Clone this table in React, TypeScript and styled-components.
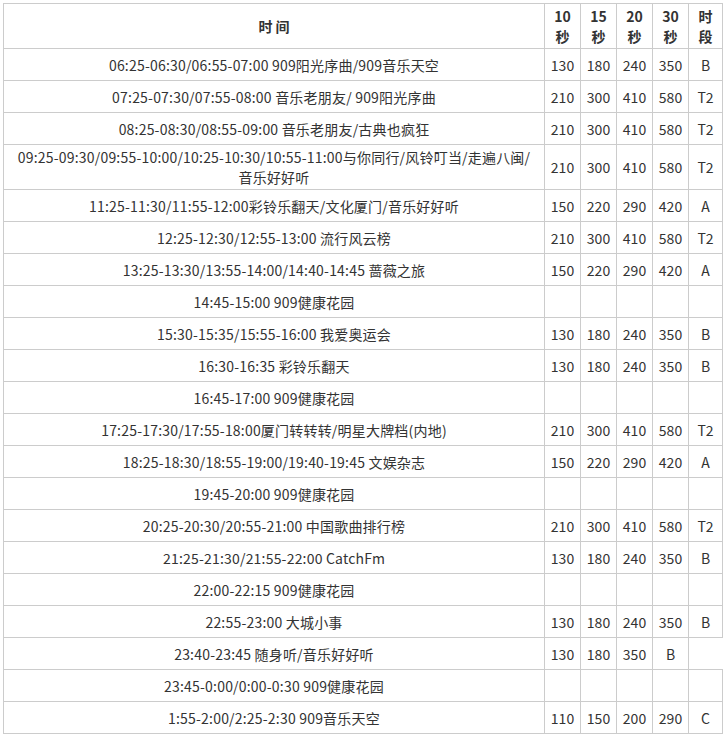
import * as React from "react";
import styled, { createGlobalStyle } from "styled-components";

const Global = createGlobalStyle`
    body {
        margin: 0;
        padding: 3px;
        background: #fff;
        font-family: "Noto Sans CJK SC", "Noto Sans", sans-serif;
        font-size: 14px;
        color: #333;
    }
`

const Table = styled.table`
    border-collapse: collapse;
    width: 720px;
    table-layout: fixed;
`

const HeadCell = styled.th<{ $w?: number }>`
    border: 1px solid #ccc;
    padding: 2px 1px;
    line-height: 20px;
    font-weight: bold;
    text-align: center;
    width: ${p => (p.$w ? p.$w + "px" : "auto")};
`

const Cell = styled.td`
    border: 1px solid #ccc;
    padding: 2px 1px;
    line-height: 20px;
    height: 27px;
    text-align: center;
    white-space: nowrap;
`

const TimeCell = styled(Cell)`
    white-space: normal;
    padding: 2px 3px;
    letter-spacing: 0.2px;
`

type Row = { time: React.ReactNode; vals: string[] };

const rows: Row[] = [
    { time: "06:25-06:30/06:55-07:00 909阳光序曲/909音乐天空", vals: ["130", "180", "240", "350", "B"] },
    { time: "07:25-07:30/07:55-08:00 音乐老朋友/ 909阳光序曲", vals: ["210", "300", "410", "580", "T2"] },
    { time: "08:25-08:30/08:55-09:00 音乐老朋友/古典也疯狂", vals: ["210", "300", "410", "580", "T2"] },
    {
        time: (
            <>
                09:25-09:30/09:55-10:00/10:25-10:30/10:55-11:00与你同行/风铃叮当/走遍八闽/
                <br />
                音乐好好听
            </>
        ),
        vals: ["210", "300", "410", "580", "T2"],
    },
    { time: "11:25-11:30/11:55-12:00彩铃乐翻天/文化厦门/音乐好好听", vals: ["150", "220", "290", "420", "A"] },
    { time: "12:25-12:30/12:55-13:00 流行风云榜", vals: ["210", "300", "410", "580", "T2"] },
    { time: "13:25-13:30/13:55-14:00/14:40-14:45 蔷薇之旅", vals: ["150", "220", "290", "420", "A"] },
    { time: "14:45-15:00 909健康花园", vals: ["", "", "", "", ""] },
    { time: "15:30-15:35/15:55-16:00 我爱奥运会", vals: ["130", "180", "240", "350", "B"] },
    { time: "16:30-16:35 彩铃乐翻天", vals: ["130", "180", "240", "350", "B"] },
    { time: "16:45-17:00 909健康花园", vals: ["", "", "", "", ""] },
    { time: "17:25-17:30/17:55-18:00厦门转转转/明星大牌档(内地)", vals: ["210", "300", "410", "580", "T2"] },
    { time: "18:25-18:30/18:55-19:00/19:40-19:45 文娱杂志", vals: ["150", "220", "290", "420", "A"] },
    { time: "19:45-20:00 909健康花园", vals: ["", "", "", "", ""] },
    { time: "20:25-20:30/20:55-21:00 中国歌曲排行榜", vals: ["210", "300", "410", "580", "T2"] },
    { time: "21:25-21:30/21:55-22:00 CatchFm", vals: ["130", "180", "240", "350", "B"] },
    { time: "22:00-22:15 909健康花园", vals: ["", "", "", "", ""] },
    { time: "22:55-23:00 大城小事", vals: ["130", "180", "240", "350", "B"] },
    { time: "23:40-23:45 随身听/音乐好好听", vals: ["130", "180", "350", "B"] },
    { time: "23:45-0:00/0:00-0:30 909健康花园", vals: ["", "", "", "", ""] },
    { time: "1:55-2:00/2:25-2:30 909音乐天空", vals: ["110", "150", "200", "290", "C"] },
];

export default function App() {
    return (
        <>
            <Global />
            <Table>
                <thead>
                    <tr>
                        <HeadCell>时 间</HeadCell>
                        <HeadCell $w={33}>10<br />秒</HeadCell>
                        <HeadCell $w={33}>15<br />秒</HeadCell>
                        <HeadCell $w={33}>20<br />秒</HeadCell>
                        <HeadCell $w={33}>30<br />秒</HeadCell>
                        <HeadCell $w={31}>时<br />段</HeadCell>
                    </tr>
                </thead>
                <tbody>
                    {rows.map((r, i) => (
                        <tr key={i}>
                            <TimeCell>{r.time}</TimeCell>
                            {r.vals.map((v, j) => (
                                <Cell key={j}>{v}</Cell>
                            ))}
                        </tr>
                    ))}
                </tbody>
            </Table>
        </>
    );
}
